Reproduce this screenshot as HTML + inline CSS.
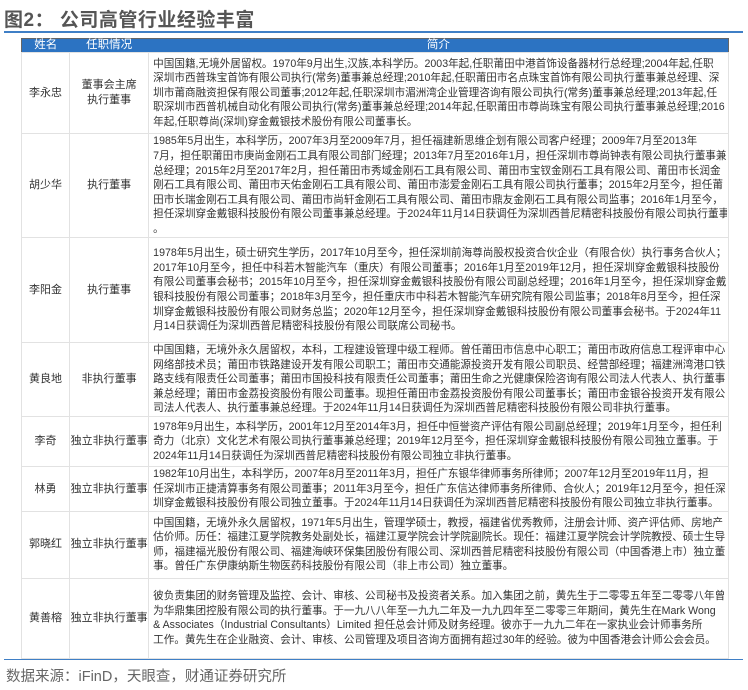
<!DOCTYPE html>
<html><head><meta charset="utf-8"><style>
body{margin:0;width:748px;height:690px;background:#fff;position:relative;overflow:hidden;font-family:"Liberation Sans","Noto Sans CJK SC",sans-serif;color:#333}
.title{position:absolute;left:4px;top:5px;font-size:19px;color:#555;font-weight:bold;letter-spacing:0.5px}
.line1{position:absolute;left:4px;top:31px;width:739px;height:2px;background:#3f7fc6}
table{position:absolute;left:21px;top:38px;width:708px;border-collapse:collapse;table-layout:fixed;border:1px solid #666}
td{border:1px solid #e2e2e2;font-size:10.6px;line-height:14.6px;padding:0;vertical-align:middle;overflow:hidden}
th{background:#2c73c2;color:#fff;font-weight:normal;font-size:11.5px;height:13px;padding:0;line-height:13px;border:none}
td.n,td.r{text-align:center;white-space:nowrap;font-size:11px}
td.d div{width:574px;padding-left:4px;white-space:nowrap;overflow:hidden}
.line2{position:absolute;left:4px;top:659px;width:739px;height:1px;background:#3f7fc6}
.src{position:absolute;left:6px;top:665px;font-size:14.5px;color:#666}
</style></head><body>
<div class="title">图2： 公司高管行业经验丰富</div>
<div class="line1"></div>
<table>
<colgroup><col style="width:48px"><col style="width:79px"><col style="width:579px"></colgroup>
<tr><th>姓名</th><th>任职情况</th><th>简介</th></tr>
<tr style="height:81px"><td class="n">李永忠</td><td class="r">董事会主席<br>执行董事</td><td class="d"><div>中国国籍,无境外居留权。1970年9月出生,汉族,本科学历。2003年起,任职莆田中港首饰设备器材行总经理;2004年起,任职<br>深圳市西普珠宝首饰有限公司执行(常务)董事兼总经理;2010年起,任职莆田市名点珠宝首饰有限公司执行董事兼总经理、深<br>圳市莆商融资担保有限公司董事;2012年起,任职深圳市湄洲湾企业管理咨询有限公司执行(常务)董事兼总经理;2013年起,任<br>职深圳市西普机械自动化有限公司执行(常务)董事兼总经理;2014年起,任职莆田市尊尚珠宝有限公司执行董事兼总经理;2016<br>年起,任职尊尚(深圳)穿金戴银技术股份有限公司董事长。</div></td></tr>
<tr style="height:104px"><td class="n">胡少华</td><td class="r">执行董事</td><td class="d"><div>1985年5月出生，本科学历，2007年3月至2009年7月，担任福建新思维企划有限公司客户经理；2009年7月至2013年<br>7月，担任职莆田市庚尚金刚石工具有限公司部门经理；2013年7月至2016年1月，担任深圳市尊尚钟表有限公司执行董事兼<br>总经理；2015年2月至2017年2月，担任莆田市秀域金刚石工具有限公司、莆田市宝钗金刚石工具有限公司、莆田市长润金<br>刚石工具有限公司、莆田市天佑金刚石工具有限公司、莆田市澎爱金刚石工具有限公司执行董事；2015年2月至今，担任莆<br>田市长瑞金刚石工具有限公司、莆田市尚轩金刚石工具有限公司、莆田市鼎友金刚石工具有限公司监事；2016年1月至今，<br>担任深圳穿金戴银科技股份有限公司董事兼总经理。于2024年11月14日获调任为深圳西普尼精密科技股份有限公司执行董事<br>。</div></td></tr>
<tr style="height:105px"><td class="n">李阳金</td><td class="r">执行董事</td><td class="d"><div>1978年5月出生，硕士研究生学历，2017年10月至今，担任深圳前海尊尚股权投资合伙企业（有限合伙）执行事务合伙人；<br>2017年10月至今，担任中科若木智能汽车（重庆）有限公司董事；2016年1月至2019年12月，担任深圳穿金戴银科技股份<br>有限公司董事会秘书；2015年10月至今，担任深圳穿金戴银科技股份有限公司副总经理；2016年1月至今，担任深圳穿金戴<br>银科技股份有限公司董事；2018年3月至今，担任重庆市中科若木智能汽车研究院有限公司监事；2018年8月至今，担任深<br>圳穿金戴银科技股份有限公司财务总监；2020年12月至今，担任深圳穿金戴银科技股份有限公司董事会秘书。于2024年11<br>月14日获调任为深圳西普尼精密科技股份有限公司联席公司秘书。</div></td></tr>
<tr style="height:71px"><td class="n">黄良地</td><td class="r">非执行董事</td><td class="d"><div>中国国籍，无境外永久居留权，本科，工程建设管理中级工程师。曾任莆田市信息中心职工；莆田市政府信息工程评审中心<br>网络部技术员；莆田市铁路建设开发有限公司职工；莆田市交通能源投资开发有限公司职员、经营部经理；福建洲湾港口铁<br>路支线有限责任公司董事；莆田市国投科技有限责任公司董事；莆田生命之光健康保险咨询有限公司法人代表人、执行董事<br>兼总经理；莆田市金荔投资股份有限公司董事。现担任莆田市金荔投资股份有限公司董事长；莆田市金银谷投资开发有限公<br>司法人代表人、执行董事兼总经理。于2024年11月14日获调任为深圳西普尼精密科技股份有限公司非执行董事。</div></td></tr>
<tr style="height:50px"><td class="n">李奇</td><td class="r">独立非执行董事</td><td class="d"><div>1978年9月出生，本科学历，2001年12月至2014年3月，担任中恒誉资产评估有限公司副总经理；2019年1月至今，担任利<br>奇力（北京）文化艺术有限公司执行董事兼总经理；2019年12月至今，担任深圳穿金戴银科技股份有限公司独立董事。于<br>2024年11月14日获调任为深圳西普尼精密科技股份有限公司独立非执行董事。</div></td></tr>
<tr style="height:43px"><td class="n">林勇</td><td class="r">独立非执行董事</td><td class="d"><div>1982年10月出生，本科学历，2007年8月至2011年3月，担任广东银华律师事务所律师；2007年12月至2019年11月，担<br>任深圳市正捷清算事务有限公司董事；2011年3月至今，担任广东信达律师事务所律师、合伙人；2019年12月至今，担任深<br>圳穿金戴银科技股份有限公司独立董事。于2024年11月14日获调任为深圳西普尼精密科技股份有限公司独立非执行董事。</div></td></tr>
<tr style="height:67px"><td class="n">郭晓红</td><td class="r">独立非执行董事</td><td class="d"><div>中国国籍，无境外永久居留权，1971年5月出生，管理学硕士，教授，福建省优秀教师，注册会计师、资产评估师、房地产<br>估价师。历任：福建江夏学院教务处副处长，福建江夏学院会计学院副院长。现任：福建江夏学院会计学院教授、硕士生导<br>师，福建福光股份有限公司、福建海峡环保集团股份有限公司、深圳西普尼精密科技股份有限公司（中国香港上市）独立董<br>事。曾任广东伊康纳斯生物医药科技股份有限公司（非上市公司）独立董事。</div></td></tr>
<tr style="height:80px"><td class="n">黄善榕</td><td class="r">独立非执行董事</td><td class="d"><div>彼负责集团的财务管理及监控、会计、审核、公司秘书及投资者关系。加入集团之前，黄先生于二零零五年至二零零八年曾<br>为华鼎集团控股有限公司的执行董事。于一九八八年至一九九二年及一九九四年至二零零三年期间，黄先生在Mark Wong<br>&amp; Associates（Industrial Consultants）Limited 担任总会计师及财务经理。彼亦于一九九二年在一家执业会计师事务所<br>工作。黄先生在企业融资、会计、审核、公司管理及项目咨询方面拥有超过30年的经验。彼为中国香港会计师公会会员。</div></td></tr>
</table>
<div class="line2"></div>
<div class="src">数据来源：iFinD，天眼查，财通证券研究所</div>
</body></html>
